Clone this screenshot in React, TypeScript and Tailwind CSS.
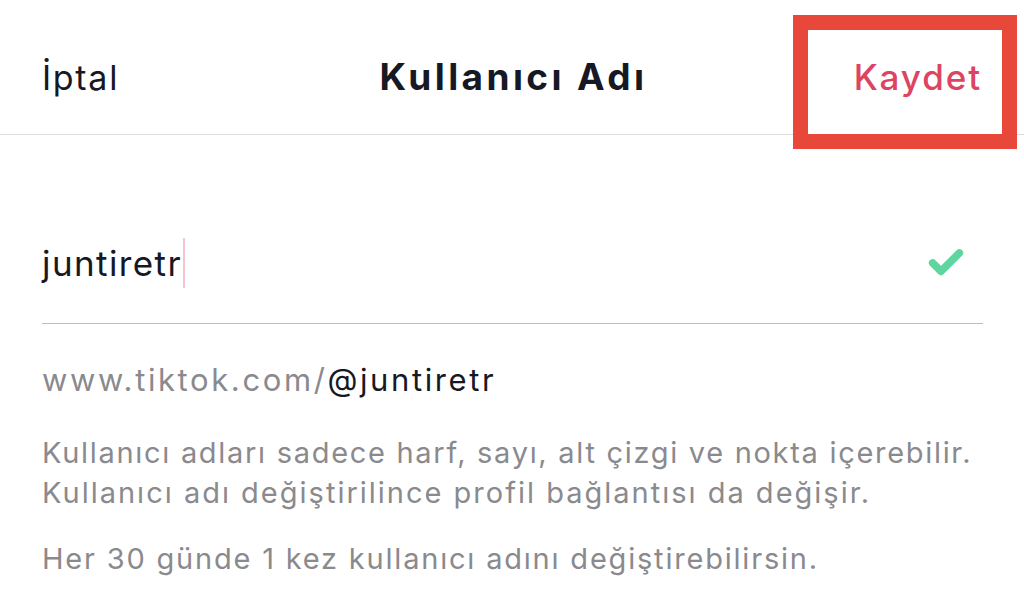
import { Check } from "lucide-react";

export default function App() {
    return (
        <div className="relative w-[1024px] h-[595px] bg-white overflow-hidden font-['Inter','Liberation_Sans',sans-serif] text-[#161823]">
            <div className="grid grid-cols-[1fr_auto_1fr] items-center h-[135px] pt-[20px] px-[42px] border-b border-[#dcdcdc]">
                <span className="text-[34px] font-normal tracking-[1.7px]">İptal</span>
                <span className="text-[37px] font-bold tracking-[3.4px] pl-[3px]">Kullanıcı Adı</span>
                <span className="justify-self-end text-[35px] font-medium text-[#dd4462] tracking-[1.9px]">Kaydet</span>
            </div>

            {/* annotation box */}
            <div className="absolute left-[793px] top-[15px] w-[224px] h-[134px] border-[15px] border-[#e8483a]" />

            <div className="px-[42px]">
                <div className="flex items-center justify-between h-[189px] pt-[68px] border-b border-[#bdbdbd] mr-[-1px]">
                    <div className="flex items-center text-[35px] tracking-[1.4px]">
                        <span>juntiretr</span>
                        <span className="ml-[1px] w-[2px] h-[50px] bg-[#f4c6d0]" />
                    </div>
                    <Check className="mr-[17px] text-[#5fd69f]" size={40} strokeWidth={4.6} />
                </div>

                <div className="mt-[36px] text-[31px] tracking-[2.6px] leading-[40px]">
                    <span className="text-[#8a8a8e]">www.tiktok.com/</span>
                    <span className="text-[#161823]">@juntiretr</span>
                </div>

                <div className="mt-[33px] text-[29px] text-[#8a8a8e] leading-[40px]">
                    <p className="tracking-[1.7px]">Kullanıcı adları sadece harf, sayı, alt çizgi ve nokta içerebilir.</p>
                    <p className="tracking-[2px]">Kullanıcı adı değiştirilince profil bağlantısı da değişir.</p>
                </div>

                <p className="mt-[26px] text-[29px] text-[#8a8a8e] leading-[40px] tracking-[1.8px]">
                    Her 30 günde 1 kez kullanıcı adını değiştirebilirsin.
                </p>
            </div>
        </div>
    );
}
